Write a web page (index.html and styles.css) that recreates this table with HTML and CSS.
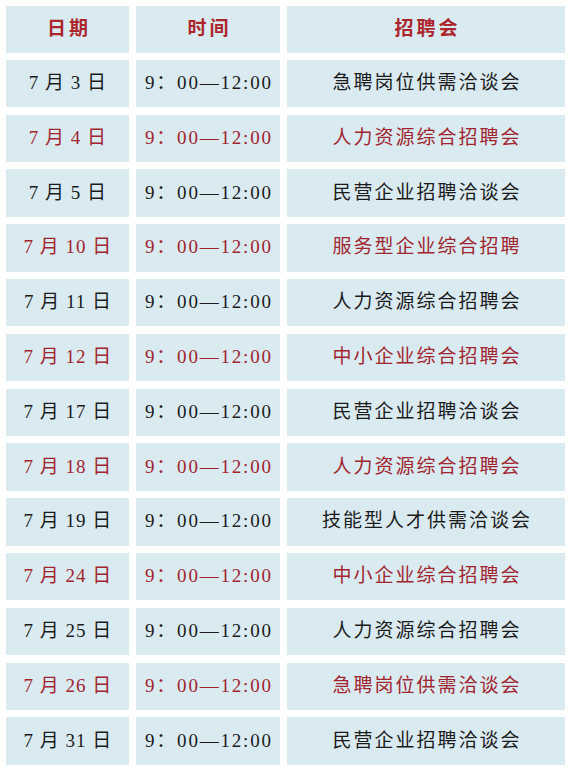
FILE: index.html
```html
<!DOCTYPE html>
<html lang="zh-CN">
<head>
<meta charset="utf-8">
<title>招聘会安排</title>
<link rel="stylesheet" href="styles.css">
</head>
<body>
<div class="schedule">
  <div class="cell head">日期</div>
  <div class="cell head">时间</div>
  <div class="cell head">招聘会</div>

  <div class="cell date">7 月 3 日</div>
  <div class="cell time">9：00—12:00</div>
  <div class="cell name">急聘岗位供需洽谈会</div>

  <div class="cell date red">7 月 4 日</div>
  <div class="cell time red">9：00—12:00</div>
  <div class="cell name red">人力资源综合招聘会</div>

  <div class="cell date">7 月 5 日</div>
  <div class="cell time">9：00—12:00</div>
  <div class="cell name">民营企业招聘洽谈会</div>

  <div class="cell date red">7 月 10 日</div>
  <div class="cell time red">9：00—12:00</div>
  <div class="cell name red">服务型企业综合招聘</div>

  <div class="cell date">7 月 11 日</div>
  <div class="cell time">9：00—12:00</div>
  <div class="cell name">人力资源综合招聘会</div>

  <div class="cell date red">7 月 12 日</div>
  <div class="cell time red">9：00—12:00</div>
  <div class="cell name red">中小企业综合招聘会</div>

  <div class="cell date">7 月 17 日</div>
  <div class="cell time">9：00—12:00</div>
  <div class="cell name">民营企业招聘洽谈会</div>

  <div class="cell date red">7 月 18 日</div>
  <div class="cell time red">9：00—12:00</div>
  <div class="cell name red">人力资源综合招聘会</div>

  <div class="cell date">7 月 19 日</div>
  <div class="cell time">9：00—12:00</div>
  <div class="cell name">技能型人才供需洽谈会</div>

  <div class="cell date red">7 月 24 日</div>
  <div class="cell time red">9：00—12:00</div>
  <div class="cell name red">中小企业综合招聘会</div>

  <div class="cell date">7 月 25 日</div>
  <div class="cell time">9：00—12:00</div>
  <div class="cell name">人力资源综合招聘会</div>

  <div class="cell date red">7 月 26 日</div>
  <div class="cell time red">9：00—12:00</div>
  <div class="cell name red">急聘岗位供需洽谈会</div>

  <div class="cell date">7 月 31 日</div>
  <div class="cell time">9：00—12:00</div>
  <div class="cell name">民营企业招聘洽谈会</div>
</div>
</body>
</html>
```
FILE: styles.css
```css
html, body {
  margin: 0;
  padding: 0;
  background: #ffffff;
}

body {
  padding: 6px 0 0 6px;
  font-family: "Liberation Serif", "Noto Sans CJK SC", serif;
  color: #1b1b1b;
}

.schedule {
  display: grid;
  grid-template-columns: 123px 144px 278px;
  grid-template-rows: 46.5px;
  grid-auto-rows: 47.5px;
  column-gap: 7px;
  row-gap: 7.3px;
}

.cell {
  background: #daeaf1;
  display: flex;
  align-items: center;
  justify-content: center;
  font-size: 19px;
  line-height: 1;
  white-space: pre;
  padding-bottom: 2px;
  box-sizing: border-box;
}

.head {
  color: #ad252c;
  font-weight: bold;
  letter-spacing: 3px;
  padding: 0 0 2px 3px;
}

.date {
  letter-spacing: 1px;
  padding-left: 1px;
}

.time {
  letter-spacing: 1.8px;
  padding-left: 1.8px;
}

.name {
  letter-spacing: 2px;
  padding-left: 2px;
}

.red {
  color: #a1252f;
}
```
